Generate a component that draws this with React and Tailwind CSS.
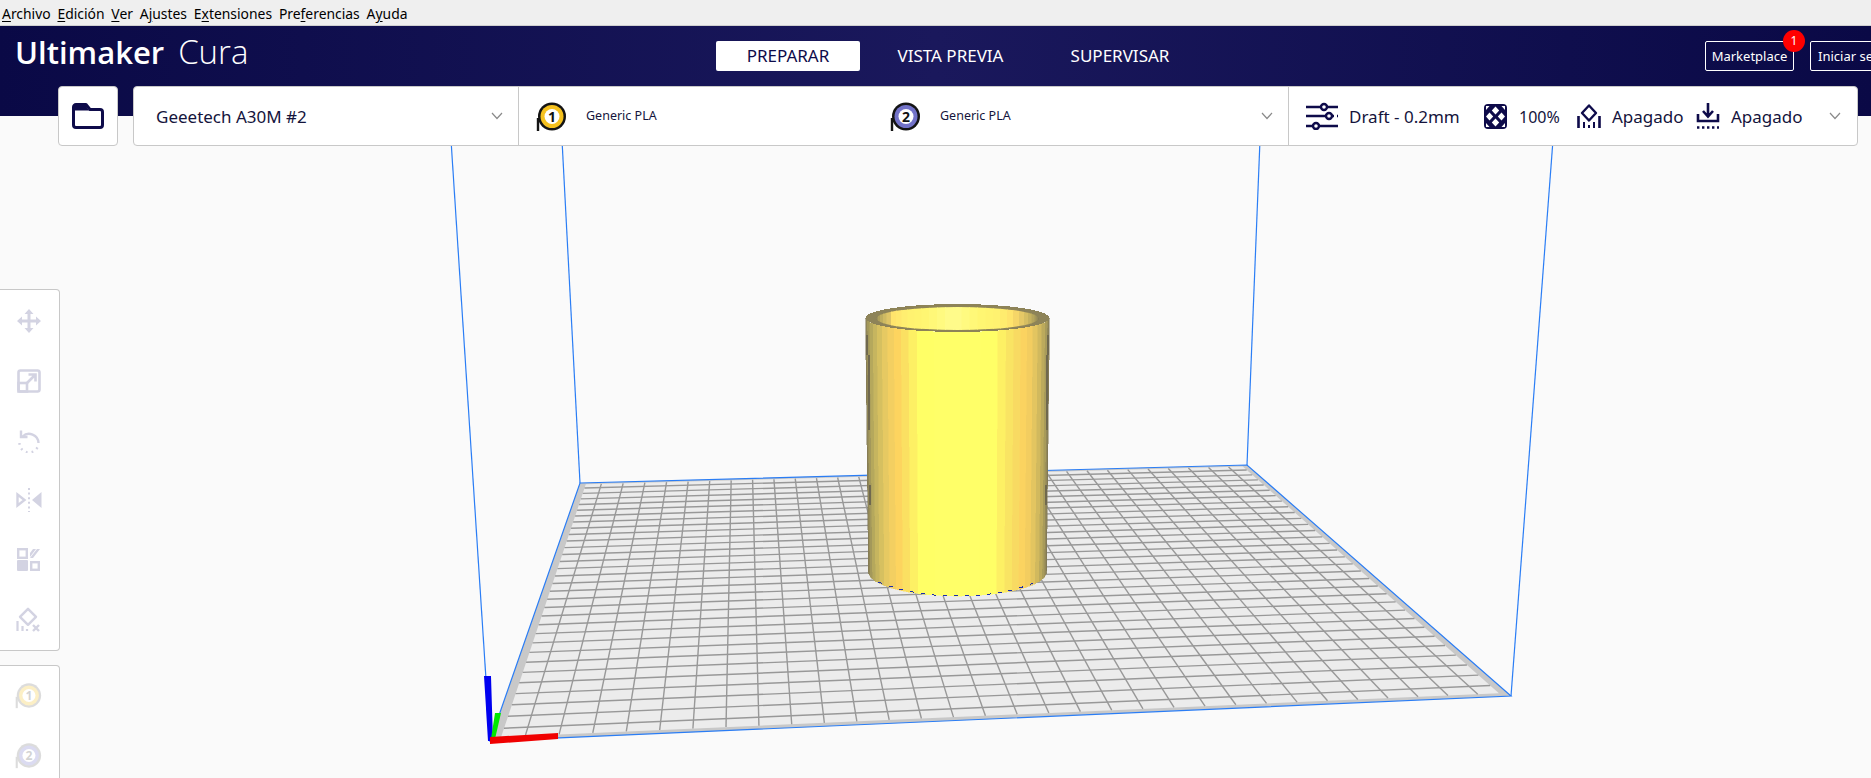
import React from 'react';

const NAVY = '#0e0b4a';
const MUTED = '#d3d3e2';

// maps a point of the unit square onto the build plate (projective)
const makeProjector = (p0, p1, p2, p3) => {
    const dx1 = p1[0] - p2[0];
    const dx2 = p3[0] - p2[0];
    const dy1 = p1[1] - p2[1];
    const dy2 = p3[1] - p2[1];
    const sx = p0[0] - p1[0] + p2[0] - p3[0];
    const sy = p0[1] - p1[1] + p2[1] - p3[1];
    const det = dx1 * dy2 - dx2 * dy1;
    const g = (sx * dy2 - dx2 * sy) / det;
    const h = (dx1 * sy - sx * dy1) / det;
    const a = p1[0] - p0[0] + g * p1[0];
    const b = p3[0] - p0[0] + h * p3[0];
    const d = p1[1] - p0[1] + g * p1[1];
    const e = p3[1] - p0[1] + h * p3[1];
    return (u, v) => {
        const w = g * u + h * v + 1;
        return [(a * u + b * v + p0[0]) / w, (d * u + e * v + p0[1]) / w];
    };
};

const BL = [580, 483];
const BR = [1247, 465];
const FR = [1511, 696];
const FL = [490, 741];
const project = makeProjector(BL, BR, FR, FL);
const pts = (list) => list.map((p) => p.map((n) => n.toFixed(1)).join(',')).join(' ');

const GRID = 32;
const INSET = 0.009;

const gridLines = () => {
    const lines = [];
    for (let i = 1; i < GRID; i++) {
        const t = i / GRID;
        lines.push([project(t, INSET), project(t, 1 - INSET)]);
        lines.push([project(INSET, t), project(1 - INSET, t)]);
    }
    return lines;
};

const shades = [
    '#7c7352', '#8f8556', '#a3985a', '#b5a85c', '#c6b55f', '#d6c060', '#e6c962', '#f3cf61', '#fdd45f',
    '#fbe062', '#fdf064', '#ffff66', '#ffff66', '#ffff68', '#ffff68', '#ffff68', '#ffff68', '#ffff68',
    '#ffff66', '#ffff66', '#fdf064', '#f9e463', '#f8da62', '#fbd360', '#f3cd60', '#e3c560', '#d1b95e',
    '#bcaa5c', '#a89b5a', '#938858', '#827955',
];

const wellShades = [
    '#8d8358', '#9c9058', '#ad9f5b', '#bfae5e', '#cfba62', '#dfc566', '#ffe46c', '#ffe86e', '#ffee70', '#fff270',
    '#fff470', '#fff672', '#fff878', '#fffa80', '#fffb8a', '#fffb8a', '#fffa80', '#fff878', '#fff672',
    '#fff470', '#fff270', '#ffec6e', '#ffe46c', '#f6d668', '#e6c966', '#d6be62', '#c6b25e', '#b5a55c',
    '#a4975a', '#948958', '#857c55',
];

const Cylinder = () => {
    const cx = 957.5;
    const topY = 318;
    const botY = 572;
    const rxTop = 92;
    const rxBot = 89;
    const n = shades.length;
    const strips = shades.map((color, i) => {
        const a0 = -Math.PI / 2 + (Math.PI * i) / n;
        const a1 = -Math.PI / 2 + (Math.PI * (i + 1)) / n;
        const point = (a, rx, y, ry) => [cx + rx * Math.sin(a), y + ry * Math.cos(a)];
        return {
            color,
            poly: [point(a0, rxTop, topY, 14), point(a1, rxTop, topY, 14), point(a1, rxBot, botY, 24), point(a0, rxBot, botY, 24)],
        };
    });
    const inner = wellShades.map((color, i) => {
        const a0 = -Math.PI / 2 + (Math.PI * i) / n;
        const a1 = -Math.PI / 2 + (Math.PI * (i + 1)) / n;
        return {
            color,
            poly: [
                [cx + 81 * Math.sin(a0), topY - 12 * Math.cos(a0)],
                [cx + 81 * Math.sin(a1), topY - 12 * Math.cos(a1)],
                [cx + 81 * Math.sin(a1), topY + 12],
                [cx + 81 * Math.sin(a0), topY + 12],
            ],
        };
    });
    return (
        <g shapeRendering="crispEdges">
            <clipPath id="well">
                <ellipse cx={cx} cy={topY + 0.5} rx="81" ry="11.5" />
            </clipPath>
            {strips.map((s, i) => (
                <polygon key={i} points={pts(s.poly)} fill={s.color} stroke={s.color} strokeWidth="0.5" />
            ))}
            <ellipse cx={cx} cy={topY} rx={rxTop} ry="14" fill="#8d8358" />
            <g clipPath="url(#well)">
                {inner.map((s, i) => (
                    <polygon key={i} points={pts(s.poly)} fill={s.color} stroke={s.color} strokeWidth="0.5" />
                ))}
            </g>
            <path d="M866 335h2v20h-2zM1047 335h2v20h-2zM868 430h2v-75h-2zM1046 430h2v-75h-2zM869 505h2v-20h-2zM1045 505h2v-20h-2z" fill="#6f684e" />
            <path d={`M${cx - rxBot + 10} 582Q${cx - 45} 596 ${cx} 596Q${cx + 45} 596 ${cx + rxBot - 10} 582`} fill="none" stroke="#1a2bb0" strokeWidth="1" strokeDasharray="4 7" />
        </g>
    );
};

const Scene = () => (
    <svg className="absolute left-0 top-0" width="1871" height="778" viewBox="0 0 1871 778">
        <polygon points={pts([BL, BR, FR, FL])} fill="#c8c8c8" />
        <polygon points={pts([project(INSET, INSET), project(1 - INSET, INSET), project(1 - INSET, 1 - INSET), project(INSET, 1 - INSET)])} fill="#ececec" />
        {gridLines().map(([a, b], i) => (
            <line key={i} x1={a[0]} y1={a[1]} x2={b[0]} y2={b[1]} stroke="#989898" strokeWidth="1.4" />
        ))}
        <g fill="none" stroke="#2a7df5" strokeWidth="1.2">
            <polygon points={pts([BL, BR, FR, FL])} />
            <line x1="451" y1="140" x2="490" y2="741" />
            <line x1="562" y1="140" x2="580" y2="483" />
            <line x1="1260" y1="140" x2="1247" y2="465" />
            <line x1="1553" y1="140" x2="1511" y2="696" />
        </g>
        <Cylinder />
        <polygon points="484,676 491,676 493,741 488,741" fill="#0000f0" />
        <polygon points="495,713 501,713 495,739 491,739" fill="#00e800" />
        <polygon points="490,737 558,733 558,739 490,744" fill="#f00000" />
    </svg>
);

const Chevron = ({ className = '' }) => (
    <svg className={className} width="12" height="8" viewBox="0 0 12 8" fill="none">
        <path d="M1 1l5 5.5L11 1" stroke="#8a8a8a" strokeWidth="1.2" />
    </svg>
);

const FolderIcon = () => (
    <svg width="32" height="26" viewBox="0 0 32 26" fill="none">
        <path d="M1.5 4A2.5 2.5 0 014 1.5h10l4 5h10a2.5 2.5 0 012.5 2.5v13a2.5 2.5 0 01-2.5 2.5H4A2.5 2.5 0 011.5 22z" stroke={NAVY} strokeWidth="3" strokeLinejoin="round" />
        <path d="M3 3h11l3 4.500H3z" fill={NAVY} />
    </svg>
);

const ExtruderIcon = ({ number, ring, ink = '#111', line = '#141414', size = 31 }) => (
    <svg width={size} height={size} viewBox="0 0 31 31" className="shrink-0">
        <path d="M2 30V17" stroke={line} strokeWidth="2.4" fill="none" />
        <circle cx="16" cy="15.5" r="14" fill={line} />
        <circle cx="16" cy="15.5" r="11.5" fill={ring} />
        <circle cx="16" cy="15.5" r="7.5" fill="#fff" />
        <text x="16" y="20.5" textAnchor="middle" fontSize="14" fontWeight="700" fill={ink} fontFamily="'Noto Sans', sans-serif">
            {number}
        </text>
    </svg>
);

const SlidersIcon = () => (
    <svg width="32" height="28" viewBox="0 0 32 28" fill="none" stroke={NAVY} strokeWidth="2.4">
        <path d="M0 5h15M21 5h11M0 14h20M26 14h2M31 14h1M0 24h7M13 24h19" />
        <circle cx="18" cy="5" r="3" />
        <circle cx="23" cy="14" r="3" />
        <circle cx="10" cy="24" r="3" />
    </svg>
);

const InfillIcon = () => (
    <svg width="23" height="25" viewBox="0 0 23 25">
        <rect width="23" height="25" rx="4" fill={NAVY} />
        <path d="M11.500 2.500l3.700 4-3.700 4-3.700-4zM11.500 14.500l3.700 4-3.700 4-3.700-4zM5.500 8.500l3.700 4-3.700 4-3.500-4zM17.500 8.500l3.500 4-3.500 4-3.700-4z" fill="#fff" />
        <path d="M2 2h3.500L2 6zM21 2h-3.500L21 6zM2 23h3.500L2 19zM21 23h-3.500L21 19z" fill="#fff" />
    </svg>
);

const SupportIcon = ({ color = NAVY }) => (
    <svg width="24" height="26" viewBox="0 0 24 26" fill="none">
        <path d="M12 2.500l7 7.500-7 7.500-7-7.500z" stroke={color} strokeWidth="2.400" strokeLinejoin="round" />
        <path d="M1.500 13v12M22.500 13v12" stroke={color} strokeWidth="2.600" />
        <path d="M7 19v6M12 22v3M17 19v6" stroke={color} strokeWidth="2" />
    </svg>
);

const AdhesionIcon = () => (
    <svg width="24" height="26" viewBox="0 0 24 26" fill="none" stroke={NAVY}>
        <path d="M12 0v13M7 8l5 5.500L17 8" strokeWidth="2.600" />
        <path d="M2 11v7h20v-7" strokeWidth="2.600" />
        <path d="M1 24.500h22" strokeWidth="2.600" strokeDasharray="2.400 2.600" />
    </svg>
);

const MoveIcon = () => (
    <svg width="24" height="24" viewBox="0 0 24 24" fill="none">
        <path d="M12 3v18M3 12h18" stroke={MUTED} strokeWidth="3" />
        <path d="M12 0l4.500 5h-9zM12 24l-4.500-5h9zM0 12l5-4.500v9zM24 12l-5 4.500v-9z" fill={MUTED} />
    </svg>
);

const ScaleIcon = () => (
    <svg width="24" height="24" viewBox="0 0 24 24" fill="none" stroke={MUTED} strokeWidth="2.600">
        <rect x="1.500" y="1.500" width="21" height="21" rx="2" />
        <rect x="1.500" y="14" width="8.500" height="8.500" />
        <path d="M10 14l8-8M11.500 5.500H18.500V12.500" />
    </svg>
);

const RotateIcon = () => (
    <svg width="24" height="24" viewBox="0 0 24 24" fill="none" stroke={MUTED}>
        <path d="M5.500 7.500A9.500 9.500 0 0121.500 14" strokeWidth="2.400" />
        <path d="M4 1.500v6.500h6.500" strokeWidth="2.400" />
        <path d="M2.500 14a9.500 9.500 0 0018.500 3" strokeWidth="2.400" strokeDasharray="1.800 4" />
    </svg>
);

const MirrorIcon = () => (
    <svg width="26" height="24" viewBox="0 0 26 24" fill="none">
        <path d="M13 0v24" stroke={MUTED} strokeWidth="2" strokeDasharray="2 2.600" />
        <path d="M1.500 6.500l7 5.500-7 5.500z" stroke={MUTED} strokeWidth="2.400" />
        <path d="M25.500 4v16L16 12z" fill={MUTED} />
    </svg>
);

const PerModelIcon = () => (
    <svg width="23" height="23" viewBox="0 0 23 23" fill="none">
        <rect x="1.200" y="1.200" width="8.600" height="8.600" stroke={MUTED} strokeWidth="2.400" />
        <rect x="14.200" y="14.200" width="7.600" height="7.600" stroke={MUTED} strokeWidth="2.400" />
        <rect y="12" width="11" height="11" rx="1" fill={MUTED} />
        <path d="M13 10l7-9h3L16 10zM13 5l3-4h3l-6 8z" fill={MUTED} />
    </svg>
);

const SupportBlockerIcon = () => (
    <svg width="26" height="25" viewBox="0 0 26 25" fill="none" stroke={MUTED}>
        <path d="M12 1.800l8 8-8 8-8-8z" strokeWidth="2.400" strokeLinejoin="round" />
        <path d="M1.500 14v10M6.500 19v5M11 22v2" strokeWidth="2.200" />
        <path d="M17 18l6 6M23 18l-6 6" strokeWidth="2.400" />
    </svg>
);

const Mnemonic = ({ before = '', letter, after }) => (
    <span>
        {before}
        <span className="underline underline-offset-2">{letter}</span>
        {after}
    </span>
);

const MenuBar = () => (
    <div className="h-[26px] bg-[#efefef] flex items-center pl-[2px] pt-[3px] gap-[6.8px] text-[13.9px] leading-none text-black border-b border-[#d0d0d0]">
        <Mnemonic letter="A" after="rchivo" />
        <Mnemonic letter="E" after="dición" />
        <Mnemonic letter="V" after="er" />
        <Mnemonic before="A" letter="j" after="ustes" />
        <Mnemonic before="E" letter="x" after="tensiones" />
        <Mnemonic before="Pre" letter="f" after="erencias" />
        <Mnemonic before="A" letter="y" after="uda" />
    </div>
);

const Header = () => (
    <div className="h-[90px] bg-linear-to-r from-[#0a0946] via-[#1a185c] to-[#0a0946] flex items-start text-white">
        <div className="w-[716px] shrink-0 pl-[15px] pt-[4px] text-[31px] leading-[44px] whitespace-nowrap font-['Open_Sans',sans-serif]">
            <span className="font-semibold">Ultimaker</span>
            <span className="font-light text-[33px] ml-[14px]">Cura</span>
        </div>
        <div className="flex gap-2 mt-[15px] text-[17px] leading-[30px]">
            <div className="w-[144px] h-[30px] text-center rounded-[2px] bg-white text-[#0e0b4a]">PREPARAR</div>
            <div className="w-[165px] h-[30px] text-center">VISTA PREVIA</div>
            <div className="w-[158px] h-[30px] text-center">SUPERVISAR</div>
        </div>
        <div className="ml-[506px] mt-[15px] flex gap-[16px] text-[13px]">
            <div className="relative w-[89px] h-[30px] border border-white rounded-[2px] text-center leading-[28px]">
                Marketplace
                <div className="absolute -right-[12px] -top-[12px] w-[22px] h-[22px] rounded-full bg-[#ff0000] text-[12px] leading-[22px] text-center">
                    1
                </div>
            </div>
            <div className="w-[100px] h-[30px] border border-white rounded-[2px] pl-[7px] leading-[28px] whitespace-nowrap">Iniciar sesión</div>
        </div>
    </div>
);

const Toolbar = () => (
    <div className="relative -mt-[30px] h-[60px] pl-[58px] flex gap-[15px] text-[#0e0b4a]">
        <div className="w-[60px] h-[60px] bg-white border border-[#c8c8c8] rounded-[4px] flex items-center justify-center">
            <FolderIcon />
        </div>
        <div className="w-[1725px] h-[60px] bg-white border border-[#c8c8c8] rounded-[4px] flex items-stretch">
            <div className="w-[385px] shrink-0 border-r border-[#c8c8c8] flex items-center pl-[22px] pr-[15px] justify-between text-[17px] text-[#14143c]">
                <span className="pt-[2px]">Geeetech A30M #2</span>
                <Chevron />
            </div>
            <div className="w-[770px] shrink-0 border-r border-[#c8c8c8] flex items-center pl-[17px] pr-[15px] text-[12.5px] text-[#14143c]">
                <div className="w-[354px] flex items-center gap-[19px]">
                    <ExtruderIcon number="1" ring="#f5c11e" />
                    <span className="pt-[1px]">Generic PLA</span>
                </div>
                <div className="flex items-center gap-[19px]">
                    <ExtruderIcon number="2" ring="#7272c8" />
                    <span className="pt-[1px]">Generic PLA</span>
                </div>
                <Chevron className="ml-auto" />
            </div>
            <div className="flex-1 flex items-center pl-[17px] text-[17px] text-[#14143c] whitespace-nowrap">
                <SlidersIcon />
                <span className="ml-[11px] w-[135px] pt-[2px]">Draft - 0.2mm</span>
                <InfillIcon />
                <span className="ml-[12px] w-[58px] text-[16px] pt-[2px]">100%</span>
                <SupportIcon />
                <span className="ml-[11px] w-[84px] pt-[2px]">Apagado</span>
                <AdhesionIcon />
                <span className="ml-[11px] w-[98px] pt-[2px]">Apagado</span>
                <Chevron />
            </div>
        </div>
    </div>
);

const SidePanels = () => (
    <div className="relative pt-[143px] w-[60px]">
        <div className="h-[362px] bg-white border border-[#c8c8c8] border-l-0 rounded-r-[4px] flex flex-col items-center justify-between pt-[19px] pb-[18px] pr-[2px]">
            <MoveIcon />
            <ScaleIcon />
            <RotateIcon />
            <MirrorIcon />
            <PerModelIcon />
            <SupportBlockerIcon />
        </div>
        <div className="mt-[14px] h-[140px] bg-white border border-[#c8c8c8] border-l-0 rounded-r-[4px] flex flex-col items-center gap-[33px] pt-[16px] pr-[2px]">
            <div className="opacity-25"><ExtruderIcon number="1" ring="#f5c11e" ink="#555" line="#777" size={27} /></div>
            <div className="opacity-25"><ExtruderIcon number="2" ring="#7272c8" ink="#555" line="#777" size={27} /></div>
        </div>
    </div>
);

const App = () => (
    <div className="relative w-[1871px] h-[778px] overflow-hidden bg-[#fafafa] font-['Noto_Sans',sans-serif]">
        <Scene />
        <div className="relative">
            <MenuBar />
            <Header />
            <Toolbar />
            <SidePanels />
        </div>
    </div>
);

export default App;
